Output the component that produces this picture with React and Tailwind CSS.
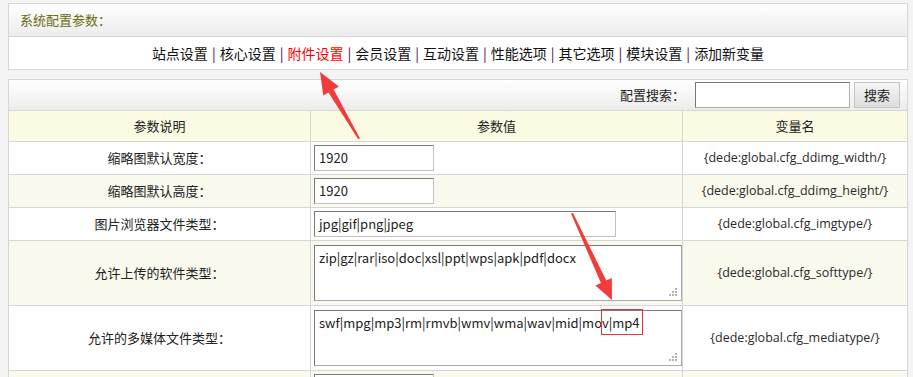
import React from 'react';

const navItems = ['站点设置', '核心设置', '附件设置', '会员设置', '互动设置', '性能选项', '其它选项', '模块设置', '添加新变量'];

const rows = [
  { label: '缩略图默认宽度：', value: '1920', kind: 'short', name: '{dede:global.cfg_ddimg_width/}' },
  { label: '缩略图默认高度：', value: '1920', kind: 'short', name: '{dede:global.cfg_ddimg_height/}' },
  { label: '图片浏览器文件类型：', value: 'jpg|gif|png|jpeg', kind: 'mid', name: '{dede:global.cfg_imgtype/}' },
  { label: '允许上传的软件类型：', value: 'zip|gz|rar|iso|doc|xsl|ppt|wps|apk|pdf|docx', kind: 'area', name: '{dede:global.cfg_softtype/}' },
  { label: '允许的多媒体文件类型：', value: 'swf|mpg|mp3|rm|rmvb|wmv|wma|wav|mid|mov|mp4', kind: 'area', name: '{dede:global.cfg_mediatype/}' },
  { label: '', value: '', kind: 'short', name: '' },
];

function Grip() {
  return (
    <svg width="9" height="9" viewBox="0 0 9 9" className="absolute right-[3px] bottom-[3px]">
      <g fill="#b5b5b5">
        <rect x="6" y="0" width="2" height="2" />
        <rect x="3" y="3" width="2" height="2" />
        <rect x="6" y="3" width="2" height="2" />
        <rect x="0" y="6" width="2" height="2" />
        <rect x="3" y="6" width="2" height="2" />
        <rect x="6" y="6" width="2" height="2" />
      </g>
    </svg>
  );
}

function ValueField({ row }) {
  if (row.kind === 'area') {
    return (
      <div className="relative w-[368px] h-[56px] bg-white border border-[#a9a9a9] border-t-[#7a7a7a] border-l-[#7a7a7a] px-[4px] pt-[3px] text-[13px] text-[#222] leading-[18px]">
        {row.value}
        <Grip />
      </div>
    );
  }
  const w = row.kind === 'mid' ? 'w-[302px]' : 'w-[120px]';
  return (
    <div className={`${w} h-[26px] bg-white border border-[#c2c2c2] border-t-[#7a7a7a] border-l-[#7a7a7a] px-[4px] flex items-center text-[13px] text-[#222]`}>
      {row.value}
    </div>
  );
}

export default function App() {
  return (
    <div className="relative min-h-screen bg-[#f4f4f4] pl-[8px] pt-[3px] overflow-hidden" style={{ fontFamily: '"Noto Sans CJK SC", "Noto Sans", sans-serif' }}>
      <div className="w-[900px] border border-[#d6d6d6] bg-white">
        <div className="h-[33px] flex items-center pl-[11px] bg-gradient-to-b from-white to-[#ececec] border-b border-[#d6d6d6] text-[13px] text-[#6b6b10]">
          系统配置参数：
        </div>
        <div className="h-[32px] flex items-center justify-center text-[14px] text-[#111]">
          {navItems.map((n, i) => (
            <span key={n} className="flex items-center">
              {i > 0 && <span className="mx-[4px] text-[#4a1050]">|</span>}
              <span className={n === '附件设置' ? 'text-[#ff0000]' : ''}>{n}</span>
            </span>
          ))}
        </div>
      </div>

      <div className="mt-[9px] w-[900px] border border-[#d6d6d6] bg-white text-[13px] text-[#222]">
        <div className="h-[31px] flex items-center justify-end pr-[7px] bg-gradient-to-b from-white to-[#ececec] border-b border-[#d6d6d6]">
          <span className="mr-[10px]">配置搜索：</span>
          <div className="w-[155px] h-[26px] bg-white border border-[#b0b0b0] border-t-[#777] border-l-[#777]" />
          <div className="ml-[4px] w-[46px] h-[26px] flex items-center justify-center border border-[#c4c4c4] bg-gradient-to-b from-[#f6f6f6] to-[#dddddd]">搜索</div>
        </div>
        <div className="grid grid-cols-[302px_372px_1fr] h-[31px] bg-[#fbfbe3] border-b border-[#d6d6d6]">
          <div className="flex items-center justify-center border-r border-[#d6d6d6]">参数说明</div>
          <div className="flex items-center justify-center border-r border-[#d6d6d6]">参数值</div>
          <div className="flex items-center justify-center">变量名</div>
        </div>
        {rows.map((r, i) => (
          <div
            key={i}
            className={`grid grid-cols-[302px_372px_1fr] border-b border-[#d6d6d6] ${i % 2 === 1 ? 'bg-[#f9f9ee]' : 'bg-white'} ${r.kind === 'area' ? 'h-[65px]' : 'h-[33px]'}`}
          >
            <div className="flex items-center justify-center border-r border-[#d6d6d6]">{r.label}</div>
            <div className="flex items-center pl-[3px] border-r border-[#d6d6d6]">
              <ValueField row={r} />
            </div>
            <div className="flex items-center justify-center text-[12.5px] text-[#2a2a2a]" style={{ fontFamily: '"Open Sans", "Noto Sans", sans-serif' }}>{r.name}</div>
          </div>
        ))}
      </div>

      <div className="absolute left-[601px] top-[309px] w-[42px] h-[26px] border border-[#ee3333]" />
      <svg className="absolute left-0 top-0 pointer-events-none" width="913" height="377">
        <polygon fill="#f23b3b" points="320,72 323.3,95.5 328.5,92.5 358,139 360,138.5 333.7,89.5 338.9,86.5" />
        <polygon fill="#f23b3b" points="612,300 611.8,278 606.3,280.5 573,213 571,213.5 600.9,283.1 595.4,285.6" />
      </svg>
    </div>
  );
}
